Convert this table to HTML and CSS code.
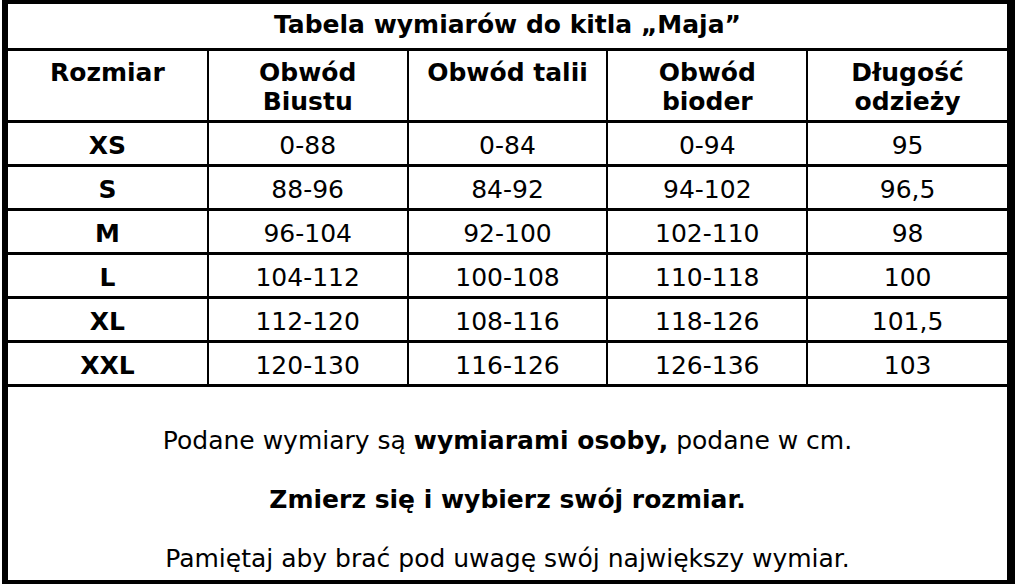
FILE: index.html
```html
<!DOCTYPE html>
<html lang="pl">
<head>
<meta charset="utf-8">
<link rel="stylesheet" href="styles.css">
</head>
<body>
<div class="sheet">
  <table class="sizes">
    <colgroup>
      <col class="c"><col class="c"><col class="c"><col class="c"><col class="c">
    </colgroup>
    <thead>
      <tr class="title-row"><th colspan="5">Tabela wymiarów do kitla „Maja”</th></tr>
      <tr class="head-row">
        <th>Rozmiar</th>
        <th>Obwód<br>Biustu</th>
        <th>Obwód talii</th>
        <th>Obwód<br>bioder</th>
        <th>Długość<br>odzieży</th>
      </tr>
    </thead>
    <tbody>
      <tr><td class="size">XS</td><td>0-88</td><td>0-84</td><td>0-94</td><td>95</td></tr>
      <tr><td class="size">S</td><td>88-96</td><td>84-92</td><td>94-102</td><td>96,5</td></tr>
      <tr><td class="size">M</td><td>96-104</td><td>92-100</td><td>102-110</td><td>98</td></tr>
      <tr><td class="size">L</td><td>104-112</td><td>100-108</td><td>110-118</td><td>100</td></tr>
      <tr><td class="size">XL</td><td>112-120</td><td>108-116</td><td>118-126</td><td>101,5</td></tr>
      <tr><td class="size">XXL</td><td>120-130</td><td>116-126</td><td>126-136</td><td>103</td></tr>
    </tbody>
  </table>
  <div class="notes">
    <p>Podane wymiary są <b>wymiarami osoby,</b> podane w cm.</p>
    <p><b>Zmierz się i wybierz swój rozmiar.</b></p>
    <p>Pamiętaj aby brać pod uwagę swój największy wymiar.</p>
  </div>
</div>
</body>
</html>
```
FILE: styles.css
```css
html, body {
  margin: 0;
  padding: 0;
  background: #fff;
}
body {
  font-family: "DejaVu Sans", Verdana, sans-serif;
  color: #000;
}
.sheet {
  box-sizing: border-box;
  margin-left: 2px;
  width: 1013px;
  height: 584px;
  border-style: solid;
  border-color: #000;
  border-width: 4px 8px 4px 6px;
  display: flex;
  flex-direction: column;
}
.sizes {
  width: 100%;
  border-collapse: collapse;
  table-layout: fixed;
}
.sizes th, .sizes td {
  border: 2px solid #000;
  border-top-width: 3px;
  border-bottom-width: 3px;
  text-align: center;
  padding: 0;
}
.sizes tr > :first-child { border-left: none; }
.sizes tr > :last-child { border-right: none; }
.title-row th {
  border-top: none;
  height: 42px;
  font-size: 25px;
  line-height: 30px;
  font-weight: bold;
  vertical-align: middle;
  padding-bottom: 2px;
}
.head-row th {
  height: 72px;
  font-size: 25px;
  line-height: 29px;
  vertical-align: top;
  padding-top: 7px;
  box-sizing: border-box;
}
.sizes td {
  height: 37px;
  padding-top: 4px;
  font-size: 25px;
  line-height: 30px;
  vertical-align: middle;
}
.sizes td.size { font-weight: bold; }
.notes {
  flex: 1;
  display: flex;
  flex-direction: column;
  align-items: center;
  padding-top: 39px;
  gap: 29px;
  font-size: 25px;
}
.notes p {
  margin: 0;
  line-height: 30px;
}
```
